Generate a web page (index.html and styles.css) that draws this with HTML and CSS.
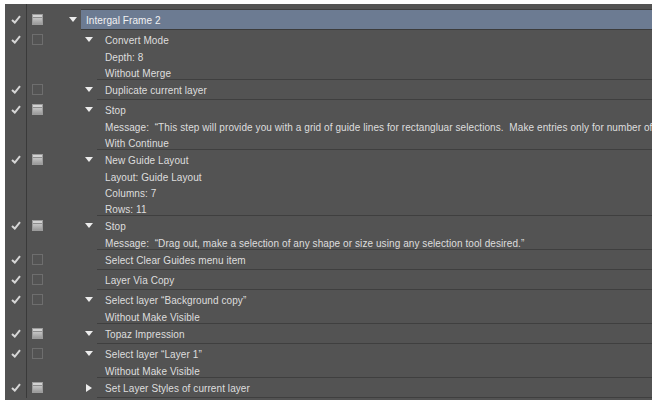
FILE: index.html
```html
<!DOCTYPE html>
<html>
<head>
<meta charset="utf-8">
<link rel="stylesheet" href="styles.css">
</head>
<body>
<div class="panel">
  <div class="row top">
    <div class="chk"></div>
    <div class="dlg"></div>
    <div class="tri lv0"></div>
    <div class="content"></div>
  </div>

  <div class="row s sel">
    <div class="chk"><div class="l1"><svg class="ck" width="10" height="9" viewBox="0 0 10 9"><path d="M1 5 L3.8 7.6 L9 1.2" fill="none" stroke="#d6d6d6" stroke-width="2"/></svg></div></div>
    <div class="dlg"><div class="l1"><i class="box on"></i></div></div>
    <div class="tri lv0"><div class="l1"><i class="td"></i></div></div>
    <div class="content c0"><div class="l1">Intergal Frame 2</div></div>
  </div>

  <div class="row g">
    <div class="chk"><div class="l1"><svg class="ck" width="10" height="9" viewBox="0 0 10 9"><path d="M1 5 L3.8 7.6 L9 1.2" fill="none" stroke="#d6d6d6" stroke-width="2"/></svg></div></div>
    <div class="dlg"><div class="l1"><i class="box"></i></div></div>
    <div class="tri lv1"><div class="l1"><i class="td"></i></div></div>
    <div class="content"><div class="l1">Convert Mode</div><div class="dl">Depth: 8</div><div class="dl">Without Merge</div></div>
  </div>

  <div class="row s">
    <div class="chk"><div class="l1"><svg class="ck" width="10" height="9" viewBox="0 0 10 9"><path d="M1 5 L3.8 7.6 L9 1.2" fill="none" stroke="#d6d6d6" stroke-width="2"/></svg></div></div>
    <div class="dlg"><div class="l1"><i class="box"></i></div></div>
    <div class="tri lv1"><div class="l1"><i class="td"></i></div></div>
    <div class="content"><div class="l1">Duplicate current layer</div></div>
  </div>

  <div class="row g">
    <div class="chk"><div class="l1"><svg class="ck" width="10" height="9" viewBox="0 0 10 9"><path d="M1 5 L3.8 7.6 L9 1.2" fill="none" stroke="#d6d6d6" stroke-width="2"/></svg></div></div>
    <div class="dlg"><div class="l1"><i class="box on"></i></div></div>
    <div class="tri lv1"><div class="l1"><i class="td"></i></div></div>
    <div class="content"><div class="l1">Stop</div><div class="dl">Message:  “This step will provide you with a grid of guide lines for rectangluar selections.  Make entries only for number of columns and rows.”</div><div class="dl">With Continue</div></div>
  </div>

  <div class="row g">
    <div class="chk"><div class="l1"><svg class="ck" width="10" height="9" viewBox="0 0 10 9"><path d="M1 5 L3.8 7.6 L9 1.2" fill="none" stroke="#d6d6d6" stroke-width="2"/></svg></div></div>
    <div class="dlg"><div class="l1"><i class="box on"></i></div></div>
    <div class="tri lv1"><div class="l1"><i class="td"></i></div></div>
    <div class="content"><div class="l1">New Guide Layout</div><div class="dl">Layout: Guide Layout</div><div class="dl">Columns: 7</div><div class="dl">Rows: 11</div></div>
  </div>

  <div class="row g">
    <div class="chk"><div class="l1"><svg class="ck" width="10" height="9" viewBox="0 0 10 9"><path d="M1 5 L3.8 7.6 L9 1.2" fill="none" stroke="#d6d6d6" stroke-width="2"/></svg></div></div>
    <div class="dlg"><div class="l1"><i class="box on"></i></div></div>
    <div class="tri lv1"><div class="l1"><i class="td"></i></div></div>
    <div class="content"><div class="l1">Stop</div><div class="dl">Message:  “Drag out, make a selection of any shape or size using any selection tool desired.”</div></div>
  </div>

  <div class="row s">
    <div class="chk"><div class="l1"><svg class="ck" width="10" height="9" viewBox="0 0 10 9"><path d="M1 5 L3.8 7.6 L9 1.2" fill="none" stroke="#d6d6d6" stroke-width="2"/></svg></div></div>
    <div class="dlg"><div class="l1"><i class="box"></i></div></div>
    <div class="tri lv1"></div>
    <div class="content"><div class="l1">Select Clear Guides menu item</div></div>
  </div>

  <div class="row s">
    <div class="chk"><div class="l1"><svg class="ck" width="10" height="9" viewBox="0 0 10 9"><path d="M1 5 L3.8 7.6 L9 1.2" fill="none" stroke="#d6d6d6" stroke-width="2"/></svg></div></div>
    <div class="dlg"><div class="l1"><i class="box"></i></div></div>
    <div class="tri lv1"></div>
    <div class="content"><div class="l1">Layer Via Copy</div></div>
  </div>

  <div class="row g">
    <div class="chk"><div class="l1"><svg class="ck" width="10" height="9" viewBox="0 0 10 9"><path d="M1 5 L3.8 7.6 L9 1.2" fill="none" stroke="#d6d6d6" stroke-width="2"/></svg></div></div>
    <div class="dlg"><div class="l1"><i class="box"></i></div></div>
    <div class="tri lv1"><div class="l1"><i class="td"></i></div></div>
    <div class="content"><div class="l1">Select layer “Background copy”</div><div class="dl">Without Make Visible</div></div>
  </div>

  <div class="row s">
    <div class="chk"><div class="l1"><svg class="ck" width="10" height="9" viewBox="0 0 10 9"><path d="M1 5 L3.8 7.6 L9 1.2" fill="none" stroke="#d6d6d6" stroke-width="2"/></svg></div></div>
    <div class="dlg"><div class="l1"><i class="box on"></i></div></div>
    <div class="tri lv1"><div class="l1"><i class="td"></i></div></div>
    <div class="content"><div class="l1">Topaz Impression</div></div>
  </div>

  <div class="row g">
    <div class="chk"><div class="l1"><svg class="ck" width="10" height="9" viewBox="0 0 10 9"><path d="M1 5 L3.8 7.6 L9 1.2" fill="none" stroke="#d6d6d6" stroke-width="2"/></svg></div></div>
    <div class="dlg"><div class="l1"><i class="box"></i></div></div>
    <div class="tri lv1"><div class="l1"><i class="td"></i></div></div>
    <div class="content"><div class="l1">Select layer “Layer 1”</div><div class="dl">Without Make Visible</div></div>
  </div>

  <div class="row s">
    <div class="chk"><div class="l1"><svg class="ck" width="10" height="9" viewBox="0 0 10 9"><path d="M1 5 L3.8 7.6 L9 1.2" fill="none" stroke="#d6d6d6" stroke-width="2"/></svg></div></div>
    <div class="dlg"><div class="l1"><i class="box on"></i></div></div>
    <div class="tri lv1"><div class="l1"><i class="tr"></i></div></div>
    <div class="content"><div class="l1">Set Layer Styles of current layer</div></div>
  </div>
</div>
</body>
</html>
```

FILE: styles.css
```css
html, body {
  margin: 0;
  padding: 0;
  background: #ffffff;
}

.panel {
  margin: 4px 0 0 5px;
  width: 647px;
  height: 396px;
  background: #535353;
  overflow: hidden;
  font-family: "Liberation Sans", Arial, sans-serif;
  font-size: 10px;
  letter-spacing: 0.08px;
  color: #dedede;
}

.row {
  display: flex;
}

.row.top {
  height: 6px;
}

.row.top .content {
  border-bottom: 1px solid #3f3f3f;
}

.chk {
  width: 21px;
  flex: none;
  border-right: 1px solid #3a3a3a;
}

.dlg {
  width: 37px;
  flex: none;
  padding-left: 5px;
  box-sizing: border-box;
}

.tri {
  flex: none;
  box-sizing: border-box;
}

.tri.lv0 {
  width: 17px;
}

.tri.lv1 {
  width: 33px;
  padding-left: 16px;
}

.content {
  flex: 1;
  min-width: 0;
  border-bottom: 1px solid #3f3f3f;
  padding-left: 8px;
  white-space: pre;
  overflow: hidden;
}

.content.c0 {
  padding-left: 5px;
  background: #6c7b92;
  color: #f2f2f2;
  border-bottom-color: #3c3c3c;
}

.l1 {
  height: 19px;
  display: flex;
  align-items: center;
}

.g .l1 {
  height: 18px;
}

.content .l1 {
  box-sizing: border-box;
  padding-top: 2px;
}

.dl {
  height: 16px;
  line-height: 19px;
  overflow: visible;
}

.dl:last-child {
  height: 15px;
}

.chk .l1 {
  justify-content: center;
  padding-left: 1px;
}

.tri .l1 {
  justify-content: center;
}

.ck {
  display: block;
}

.box {
  display: block;
  width: 11px;
  height: 11px;
  box-sizing: border-box;
  border: 1px solid #6e6e6e;
}

.box.on {
  border-color: #9c9c9c;
  background: linear-gradient(#d2d2d2 0, #d2d2d2 2px, #8d8d8d 2px, #8d8d8d 3px, #c4c4c4 3px, #9a9a9a 100%);
}

.td {
  display: block;
  width: 0;
  height: 0;
  border-left: 4.5px solid transparent;
  border-right: 4.5px solid transparent;
  border-top: 5px solid #ececec;
}

.tr {
  display: block;
  width: 0;
  height: 0;
  border-top: 4px solid transparent;
  border-bottom: 4px solid transparent;
  border-left: 6px solid #ececec;
}
```
